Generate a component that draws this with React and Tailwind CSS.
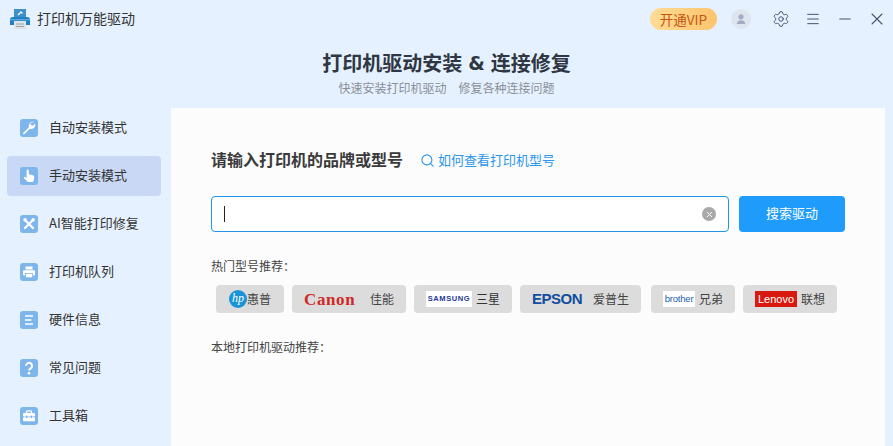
import React from "react";
import { Search, Settings, Menu, Minus, X } from "lucide-react";

const font = "font-['Noto_Sans_CJK_SC','Noto_Sans',sans-serif]";

function WrenchGlyph() {
  return (
    <svg viewBox="0 0 18 18" className="w-[18px] h-[18px]">
      <path d="M14.200 2.900a4.200 4.200 0 0 0-5.300 5.300L3.300 13.700a1 1 0 0 0 0 1.300 1 1 0 0 0 1 .2l5.500-5.400a4.200 4.200 0 0 0 5.300-5.300l-2.300 2.200-2-.6-.5-2z" fill="#fff" />
    </svg>
  );
}

function HandGlyph() {
  return (
    <svg viewBox="0 0 18 18" className="w-[18px] h-[18px]">
      <path d="M6.600 3.600a1.100 1.100 0 0 1 2.200 0v3.600l4 1c1 .3 1.500 1 1.400 2l-.4 3c-.2 1.200-1 1.900-2.200 1.900H9c-.8 0-1.400-.3-1.900-.9L4 11.200c-.5-.7.3-1.700 1.100-1.200l1.500 1z" fill="#fff" />
    </svg>
  );
}

function ToolsGlyph() {
  return (
    <svg viewBox="0 0 18 18" className="w-[18px] h-[18px]">
      <path d="M5 5l8 8M13 5l-8 8" stroke="#fff" strokeWidth="2.200" strokeLinecap="round" />
      <circle cx="5" cy="4.800" r="1.700" fill="#fff" />
      <circle cx="13.200" cy="4.800" r="1.700" fill="#fff" />
    </svg>
  );
}

function PrinterGlyph() {
  return (
    <svg viewBox="0 0 18 18" className="w-[18px] h-[18px]">
      <rect x="5.500" y="3.500" width="7" height="3" fill="#fff" />
      <rect x="3" y="7.300" width="12" height="5.200" rx="1" fill="#fff" />
      <rect x="5.500" y="10.500" width="7" height="4.300" fill="#fff" stroke="#7eb6ec" strokeWidth="0.800" />
    </svg>
  );
}

function ListGlyph() {
  return (
    <svg viewBox="0 0 18 18" className="w-[18px] h-[18px]">
      <path d="M5 5h8M5 9h6.500M5 13h8" stroke="#fff" strokeWidth="1.700" />
    </svg>
  );
}

function QuestionGlyph() {
  return (
    <svg viewBox="0 0 18 18" className="w-[18px] h-[18px]">
      <path d="M6 6.800a3 3 0 1 1 4.700 2.500C9.600 10 9 10.500 9 11.600" fill="none" stroke="#fff" strokeWidth="2" />
      <circle cx="9" cy="14.300" r="1.300" fill="#fff" />
    </svg>
  );
}

function ToolboxGlyph() {
  return (
    <svg viewBox="0 0 18 18" className="w-[18px] h-[18px]">
      <path d="M6.500 6V4.700c0-.5.400-.9.900-.9h3.200c.5 0 .9.400.9.900V6" fill="none" stroke="#fff" strokeWidth="1.300" />
      <rect x="3" y="6" width="12" height="3.400" rx="1" fill="#fff" />
      <rect x="3" y="10.200" width="12" height="4" rx="1" fill="#fff" />
      <rect x="6" y="8.600" width="1.400" height="2.400" fill="#7eb6ec" />
      <rect x="10.600" y="8.600" width="1.400" height="2.400" fill="#7eb6ec" />
    </svg>
  );
}

const navItems = [
  { label: "自动安装模式", icon: <WrenchGlyph /> },
  { label: "手动安装模式", icon: <HandGlyph />, active: true },
  { label: "AI智能打印修复", icon: <ToolsGlyph /> },
  { label: "打印机队列", icon: <PrinterGlyph /> },
  { label: "硬件信息", icon: <ListGlyph /> },
  { label: "常见问题", icon: <QuestionGlyph /> },
  { label: "工具箱", icon: <ToolboxGlyph /> },
];

function AppLogo() {
  return (
    <svg viewBox="0 0 20 20" className="w-[20px] h-[20px]">
      <rect x="4" y="0" width="12" height="8" fill="#3f8fc9" />
      <path d="M8 6l3-3M10.500 2.500l2 2" stroke="#fff" strokeWidth="1.200" />
      <path d="M0 11c0-2 1-3 3-3h14c2 0 3 1 3 3v5H0z" fill="#1f80c4" />
      <rect x="0" y="10" width="20" height="1.500" fill="#56a5dc" />
      <rect x="4" y="12" width="12" height="8" fill="#dde3e6" />
      <path d="M6 15h8M6 17.500h8" stroke="#9aa5ab" strokeWidth="1" />
    </svg>
  );
}

function TitleBar() {
  return (
    <div className="h-[38px] flex items-center">
      <div className="pl-[10px]"><AppLogo /></div>
      <span className="ml-[7px] pb-[2px] text-[14px] text-[#333]">打印机万能驱动</span>
      <div className="ml-auto flex items-center">
        <div className="w-[67px] h-[22px] rounded-full bg-gradient-to-r from-[#fedc96] to-[#fdc36c] text-[13.500px] text-[#c2570f] flex items-center justify-center">
          开通VIP
        </div>
        <div className="ml-[14px] w-[20px] h-[20px] rounded-full bg-[#dfe5ef] flex items-center justify-center">
          <svg viewBox="0 0 20 20" className="w-[20px] h-[20px]">
            <circle cx="10" cy="7.800" r="2.600" fill="#a4adc4" />
            <path d="M5.800 15c0-2.500 1.800-3.700 4.200-3.700s4.200 1.200 4.200 3.700z" fill="#a4adc4" />
          </svg>
        </div>
        <Settings className="ml-[21px] w-[18px] h-[18px] text-[#475370]" strokeWidth={1.300} />
        <Menu className="ml-[15px] w-[16px] h-[16px] text-[#475370]" strokeWidth={1.500} />
        <Minus className="ml-[15px] w-[18px] h-[18px] text-[#475370]" strokeWidth={1.400} />
        <X className="ml-[13px] mr-[6px] w-[20px] h-[20px] text-[#475370]" strokeWidth={1.300} />
      </div>
    </div>
  );
}

function Sidebar() {
  return (
    <div className="w-[171px] shrink-0 pl-[7px] pr-[10px] pt-0 flex flex-col gap-[8px]">
      {navItems.map((item) => (
        <div
          key={item.label}
          className={`h-[40px] rounded-[4px] flex items-center pl-[13px] ${item.active ? "bg-[#c9d9f5]" : ""}`}
        >
          <div className="w-[18px] h-[18px] rounded-[3px] bg-[#7eb6ec] flex items-center justify-center">
            {item.icon}
          </div>
          <span className="ml-[11px] pb-[2px] text-[13px] text-[#333]">{item.label}</span>
        </div>
      ))}
    </div>
  );
}

function Chip({ className, children }) {
  return (
    <div className={`h-[28px] rounded-[4px] bg-[#dcdcdc] flex items-center text-[12px] text-[#444] ${className}`}>
      {children}
    </div>
  );
}

function BrandRow() {
  return (
    <div className="mt-[9px] ml-[5px] flex">
      <Chip className="w-[68px] pl-[13px]">
        <div className="w-[18px] h-[18px] rounded-full bg-[#1a93d6] text-white text-[12px] italic leading-[17px] text-center font-['Liberation_Serif',serif]">hp</div>
        <span>惠普</span>
      </Chip>
      <Chip className="ml-[8px] w-[114px] pl-[12px]">
        <span className="w-[54px] text-[#cf2a27] text-[17px] leading-none font-bold font-['Liberation_Serif',serif] tracking-[0.6px]">Canon</span>
        <span className="ml-[12px]">佳能</span>
      </Chip>
      <Chip className="ml-[8px] w-[98px] pl-[12px]">
        <div className="w-[46px] h-[16px] bg-white text-[#24389c] text-[7.500px] font-bold leading-[16px] text-center font-['Liberation_Sans',sans-serif] tracking-[0.6px]">SAMSUNG</div>
        <span className="ml-[4px] text-[#333]">三星</span>
      </Chip>
      <Chip className="ml-[8px] w-[121px] pl-[12px]">
        <span className="w-[49px] text-[#134d9e] text-[15px] font-bold font-['Liberation_Sans',sans-serif] tracking-[-0.5px]">EPSON</span>
        <span className="ml-[12px]">爱普生</span>
      </Chip>
      <Chip className="ml-[10px] w-[84px] pl-[12px]">
        <div className="w-[32px] h-[16px] bg-white text-[#1c63ae] text-[9.500px] leading-[16px] text-center font-['Liberation_Sans',sans-serif] tracking-[-0.2px]">brother</div>
        <span className="ml-[4px]">兄弟</span>
      </Chip>
      <Chip className="ml-[8px] w-[94px] pl-[12px]">
        <div className="w-[42px] h-[16px] bg-[#d9190f] text-white text-[11px] leading-[16px] text-center font-['Liberation_Sans',sans-serif]">Lenovo</div>
        <span className="ml-[4px]">联想</span>
      </Chip>
    </div>
  );
}

function MainPanel() {
  return (
    <div className="w-[714px] h-[338px] bg-[#fcfcfd] pl-[40px] pt-[40px] overflow-hidden">
      <div className="flex items-center h-[24px]">
        <span className="pb-[2px] text-[16px] font-bold text-[#3a3a3a]">请输入打印机的品牌或型号</span>
        <Search className="ml-[17px] w-[15px] h-[15px] text-[#2b96ec]" strokeWidth={1.800} />
        <span className="ml-[3px] text-[13px] text-[#2b96ec]">如何查看打印机型号</span>
      </div>
      <div className="mt-[24px] flex">
        <div className="w-[518px] h-[36px] rounded-[4px] border border-[#2196e8] bg-white flex items-center pl-[12px] pr-[12px]">
          <div className="w-px h-[16px] bg-[#222]" />
          <div className="ml-auto w-[14px] h-[14px] rounded-full bg-[#a9a9a9] flex items-center justify-center">
            <X className="w-[9px] h-[9px] text-white" strokeWidth={2.500} />
          </div>
        </div>
        <div className="ml-[10px] pb-[2px] w-[106px] h-[36px] rounded-[4px] bg-[#1e9bfb] text-white text-[13px] flex items-center justify-center">
          搜索驱动
        </div>
      </div>
      <div className="mt-[24px] text-[12px] leading-[20px] text-[#444]">热门型号推荐：</div>
      <BrandRow />
      <div className="mt-[24px] text-[12px] leading-[20px] text-[#444]">本地打印机驱动推荐：</div>
    </div>
  );
}

export default function App() {
  return (
    <div className={`w-[893px] h-[446px] overflow-hidden bg-[#e6f1ff] ${font}`}>
      <TitleBar />
      <div className="h-[70px] pt-[9px] flex flex-col items-center">
        <div className="flex items-center text-[20px] leading-[32px] font-bold text-[#2f3742]">
          <span>打印机驱动安装</span>
          <span className="mx-[6px] font-['DejaVu_Sans',sans-serif] text-[19px]">&amp;</span>
          <span>连接修复</span>
        </div>
        <div className="mt-[1px] flex gap-[12px] text-[12px] leading-[16px] text-[#8a8f98]">
          <span>快速安装打印机驱动</span>
          <span>修复各种连接问题</span>
        </div>
      </div>
      <div className="flex">
        <Sidebar />
        <MainPanel />
      </div>
    </div>
  );
}
